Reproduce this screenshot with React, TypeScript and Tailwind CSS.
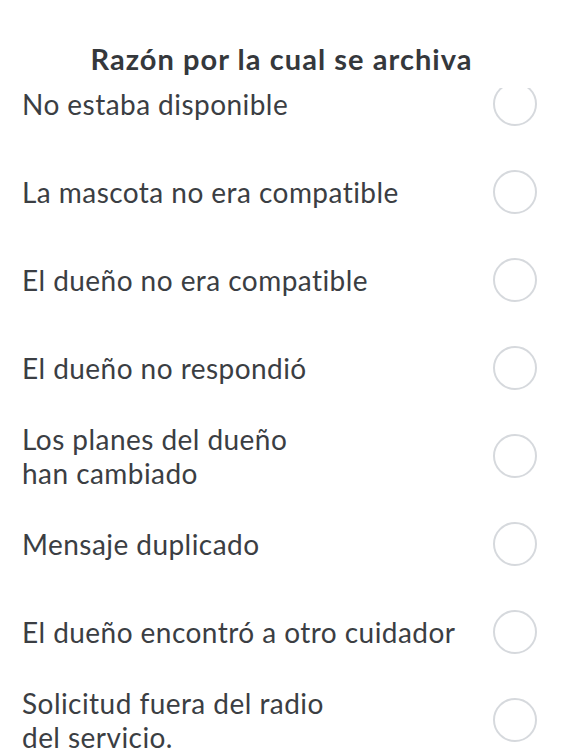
import { useState } from "react";

const reasons: string[][] = [
  ["No estaba disponible"],
  ["La mascota no era compatible"],
  ["El dueño no era compatible"],
  ["El dueño no respondió"],
  ["Los planes del dueño", "han cambiado"],
  ["Mensaje duplicado"],
  ["El dueño encontró a otro cuidador"],
  ["Solicitud fuera del radio", "del servicio."],
];

export default function App() {
  const [selected, setSelected] = useState<number | null>(null);

  return (
    <div
      className="flex h-[751px] w-full flex-col overflow-hidden bg-white text-[#3b3e43] [font-variant-ligatures:no-common-ligatures]"
      style={{ fontFamily: "Lato, 'Noto Sans', sans-serif" }}
    >
      <header className="relative z-10 h-[88px] shrink-0 bg-white pt-[41px]">
        <h1 className="text-center text-[29px] font-bold leading-[36px] tracking-[1.05px] text-[#35383c]">
          Razón por la cual se archiva
        </h1>
      </header>

      <div className="min-h-0 flex-1 overflow-hidden">
        {/* list is scrolled a little under the header */}
        <ul className="-mt-[28px]">
          {reasons.map((lines, i) => (
            <li key={i}>
              <button
                type="button"
                onClick={() => setSelected(i)}
                className="flex h-[88px] w-full items-center justify-between pl-[22px] pr-[26px] text-left"
              >
                <span className="text-[28px] leading-[34px] tracking-[0.45px]">
                  {lines.map((l, j) => (
                    <span key={j} className="block">
                      {l}
                    </span>
                  ))}
                </span>
                <span
                  className={
                    "flex h-[44px] w-[44px] shrink-0 items-center justify-center rounded-full border-2 " +
                    (selected === i ? "border-[#2c7a4b]" : "border-[#d6d9dd]")
                  }
                >
                  {selected === i && <span className="h-[22px] w-[22px] rounded-full bg-[#2c7a4b]" />}
                </span>
              </button>
            </li>
          ))}
        </ul>
      </div>
    </div>
  );
}
